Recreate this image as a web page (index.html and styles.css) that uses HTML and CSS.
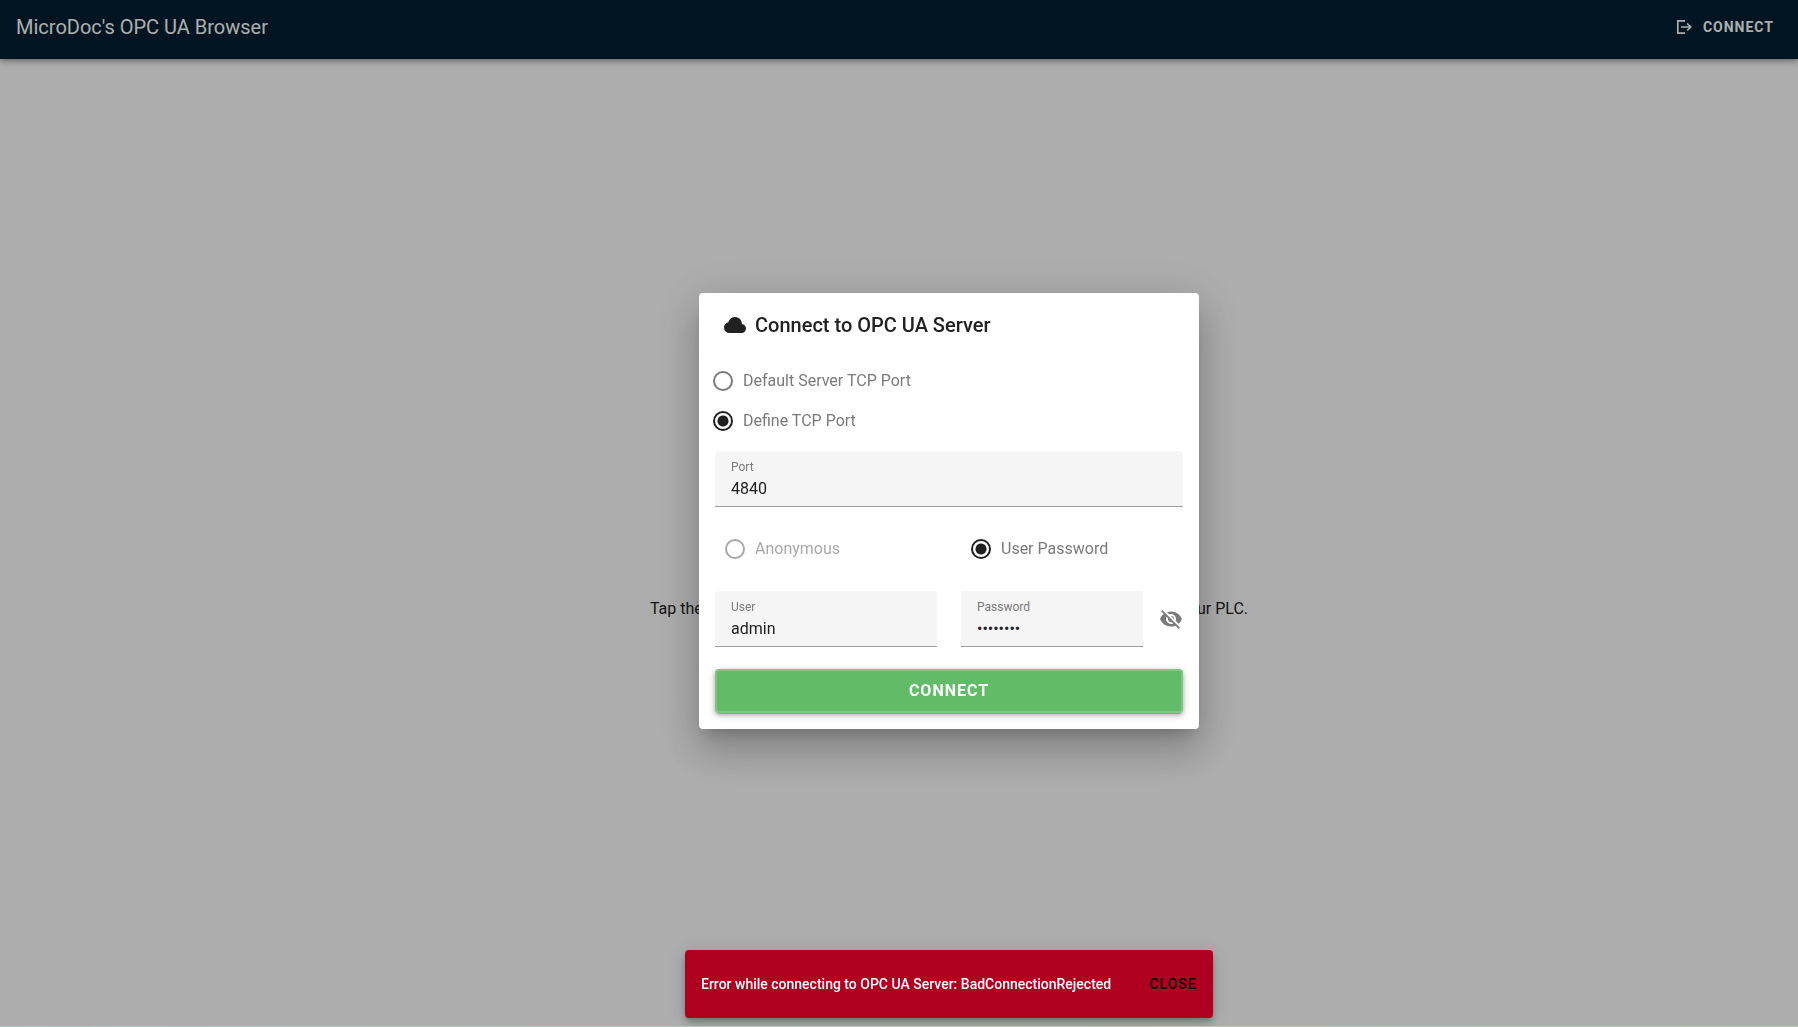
FILE: index.html
```html
<!DOCTYPE html>
<html lang="en">
<head>
  <meta charset="UTF-8" />
  <title>MicroDoc's OPC UA Browser</title>
  <link rel="stylesheet" href="styles.css">
</head>
<body>
  <header class="app-bar">
    <h1 class="app-title">MicroDoc's OPC UA Browser</h1>
    <button class="bar-button" type="button">
      <svg class="icon-small" viewBox="0 0 18 18" aria-hidden="true">
        <path d="M10 2.800H2.800v12.400H10M6 9h9.500M12.200 5.500L15.700 9l-3.500 3.500" fill="none" stroke="currentColor" stroke-width="1.700" />
      </svg>
      Connect
    </button>
  </header>

  <main class="content">
    <p>Tap the CONNECT button in the top right corner to connect to the server of your PLC.</p>
  </main>
  <div class="bottom-strip"></div>

  <div class="overlay">
    <form class="dialog" role="dialog" aria-labelledby="dialog-title">
      <h2 class="dialog-title" id="dialog-title">
        <svg class="icon" viewBox="0 0 24 24" aria-hidden="true">
          <path fill="currentColor" d="M6.500 20Q4.220 20 2.610 18.430 1 16.850 1 14.580 1 12.630 2.170 11.100 3.350 9.570 5.250 9.150 5.880 6.850 7.750 5.430 9.630 4 12 4 14.930 4 16.960 6.040 19 8.070 19 11 20.730 11.200 21.860 12.500 23 13.780 23 15.500 23 17.380 21.690 18.690 20.380 20 18.500 20Z" />
        </svg>
        Connect to OPC UA Server
      </h2>

      <div class="port-options">
        <label class="radio"><input type="radio" name="port-mode" />Default Server TCP Port</label>
        <label class="radio"><input type="radio" name="port-mode" checked />Define TCP Port</label>
      </div>

      <div class="field">
        <label for="port">Port</label>
        <input type="text" id="port" value="4840" />
      </div>

      <div class="login-options">
        <label class="radio faded"><input type="radio" name="login-mode" />Anonymous</label>
        <label class="radio"><input type="radio" name="login-mode" checked />User Password</label>
      </div>

      <div class="login-fields">
        <div class="field">
          <label for="user">User</label>
          <input type="text" id="user" value="admin" />
        </div>
        <div class="password-group">
          <div class="field">
            <label for="password">Password</label>
            <input type="password" id="password" value="password" />
          </div>
          <button class="icon-button" type="button" aria-label="Show password">
            <svg class="icon" viewBox="0 0 24 24" aria-hidden="true">
              <path fill="currentColor" d="M11.830 9L15 12.160V12a3 3 0 0 0-3-3h-.17m-4.300.8l1.550 1.550c-.05.21-.08.42-.08.65a3 3 0 0 0 3 3c.22 0 .44-.03.65-.08l1.550 1.550c-.67.33-1.410.53-2.200.53a5 5 0 0 1-5-5c0-.79.2-1.530.53-2.200M2 4.270l2.280 2.280.45.45C3.080 8.300 1.780 10 1 12c1.730 4.390 6 7.500 11 7.500 1.550 0 3.030-.3 4.380-.84l.43.42L19.730 22 21 20.730 3.270 3M12 7a5 5 0 0 1 5 5c0 .64-.13 1.260-.36 1.820l2.930 2.930c1.500-1.250 2.700-2.890 3.430-4.750-1.730-4.390-6-7.500-11-7.500-1.400 0-2.740.25-4 .7l2.170 2.150C10.740 7.130 11.350 7 12 7z" />
            </svg>
          </button>
        </div>
      </div>

      <button class="connect-button" type="submit">Connect</button>
    </form>
  </div>

  <div class="snackbar" role="alert">
    <span>Error while connecting to OPC UA Server: BadConnectionRejected</span>
    <button class="close-button" type="button">Close</button>
  </div>
</body>
</html>
```
FILE: styles.css
```css
* {
  box-sizing: border-box;
}

body {
  margin: 0;
  min-height: 100vh;
  display: flex;
  flex-direction: column;
  font-family: Roboto, sans-serif;
  font-size: 16px;
  line-height: 24px;
  color: #212121;
  background: #fff;
}

h1, h2, p {
  margin: 0;
}

button, input {
  font-family: inherit;
  margin: 0;
}

button {
  border: 0;
  background: none;
  text-transform: uppercase;
  letter-spacing: 1px;
  cursor: pointer;
}

.icon {
  width: 24px;
  height: 24px;
  flex: none;
}

.icon-small {
  width: 18px;
  height: 18px;
}

/* page */
.app-bar {
  display: flex;
  align-items: center;
  justify-content: space-between;
  height: 59px;
  padding: 0 16px 5px;
  background: #001f32;
  color: #fff;
  box-shadow: 0 2px 4px -1px rgba(0, 0, 0, 0.2), 0 4px 5px 0 rgba(0, 0, 0, 0.14), 0 1px 10px 0 rgba(0, 0, 0, 0.12);
}

.app-title {
  font-size: 20px;
  font-weight: 400;
}

.bar-button {
  display: flex;
  align-items: center;
  gap: 10px;
  padding: 0 8px;
  font-size: 14px;
  font-weight: 700;
  color: inherit;
}

.content {
  flex: 1;
  display: grid;
  place-items: center;
  padding: 132px 0 0 100px;
}

.bottom-strip {
  height: 1px;
  background: linear-gradient(to right, #a5cdc6, #b9cba8);
  position: relative;
  z-index: 2;
}

/* connect dialog */
.overlay {
  position: fixed;
  inset: 0;
  display: grid;
  place-items: center;
  padding: 0 0 5px 100px;
  background: rgba(0, 0, 0, 0.32);
}

.dialog {
  width: 500px;
  padding: 16px;
  background: #fff;
  border-radius: 4px;
  box-shadow: 0 11px 15px -7px rgba(0, 0, 0, 0.2), 0 24px 38px 3px rgba(0, 0, 0, 0.14), 0 9px 46px 8px rgba(0, 0, 0, 0.12);
}

.dialog-title {
  display: flex;
  align-items: center;
  gap: 8px;
  height: 32px;
  padding: 0 8px;
  font-size: 20px;
  font-weight: 500;
}

.port-options {
  margin: 20px 0 10px -2px;
}

.radio {
  display: flex;
  align-items: center;
  gap: 10px;
  height: 40px;
  color: #7a7a7a;
}

.radio input {
  appearance: none;
  width: 20px;
  height: 20px;
  border: 2px solid #7a7a7a;
  border-radius: 50%;
}

.radio input:checked {
  border-color: #212121;
  background: radial-gradient(circle, #212121 0 5px, transparent 6px);
}

.radio.faded {
  opacity: 0.65;
}

.field {
  display: flex;
  flex-direction: column;
  height: 56px;
  padding: 8px 16px 0;
  background: #f5f5f5;
  border-bottom: 1px solid #9e9e9e;
  border-radius: 4px 4px 0 0;
}

.field label {
  font-size: 12px;
  line-height: 16px;
  color: #7a7a7a;
}

.field input {
  width: 100%;
  height: 26px;
  padding: 0;
  border: 0;
  outline: 0;
  background: none;
  font-size: 16px;
  color: #212121;
}

.login-options,
.login-fields {
  display: grid;
  grid-template-columns: 222px 1fr;
  column-gap: 24px;
}

.login-options {
  margin: 22px 0;
  padding-left: 10px;
}

.password-group {
  display: flex;
  align-items: center;
  gap: 16px;
}

.password-group .field {
  flex: 1;
}

.icon-button {
  display: flex;
  padding: 0;
  color: #7a7a7a;
}

.connect-button {
  display: block;
  width: 100%;
  height: 44px;
  margin-top: 22px;
  padding: 0 0 2px;
  border: 2px solid #80c683;
  border-radius: 4px;
  background: #62bb66;
  color: #fff;
  font-size: 16px;
  font-weight: 700;
  box-shadow: 0 3px 1px -2px rgba(0, 0, 0, 0.2), 0 2px 4px 0 rgba(0, 0, 0, 0.24), 0 2px 8px 0 rgba(0, 0, 0, 0.16);
}

/* error message */
.snackbar {
  position: fixed;
  bottom: 9px;
  left: calc(50% + 50px);
  transform: translateX(-50%);
  display: flex;
  align-items: center;
  justify-content: space-between;
  gap: 24px;
  min-width: 528px;
  height: 68px;
  padding: 0 16px;
  border-radius: 4px;
  background: #b00020;
  color: #fff;
  font-size: 14px;
  font-weight: 500;
  white-space: nowrap;
  box-shadow: 0 3px 5px -1px rgba(0, 0, 0, 0.2), 0 6px 10px 0 rgba(0, 0, 0, 0.14), 0 1px 18px 0 rgba(0, 0, 0, 0.12);
}

.close-button {
  padding: 0;
  color: #000;
  font-size: 14px;
  font-weight: 500;
}
```
